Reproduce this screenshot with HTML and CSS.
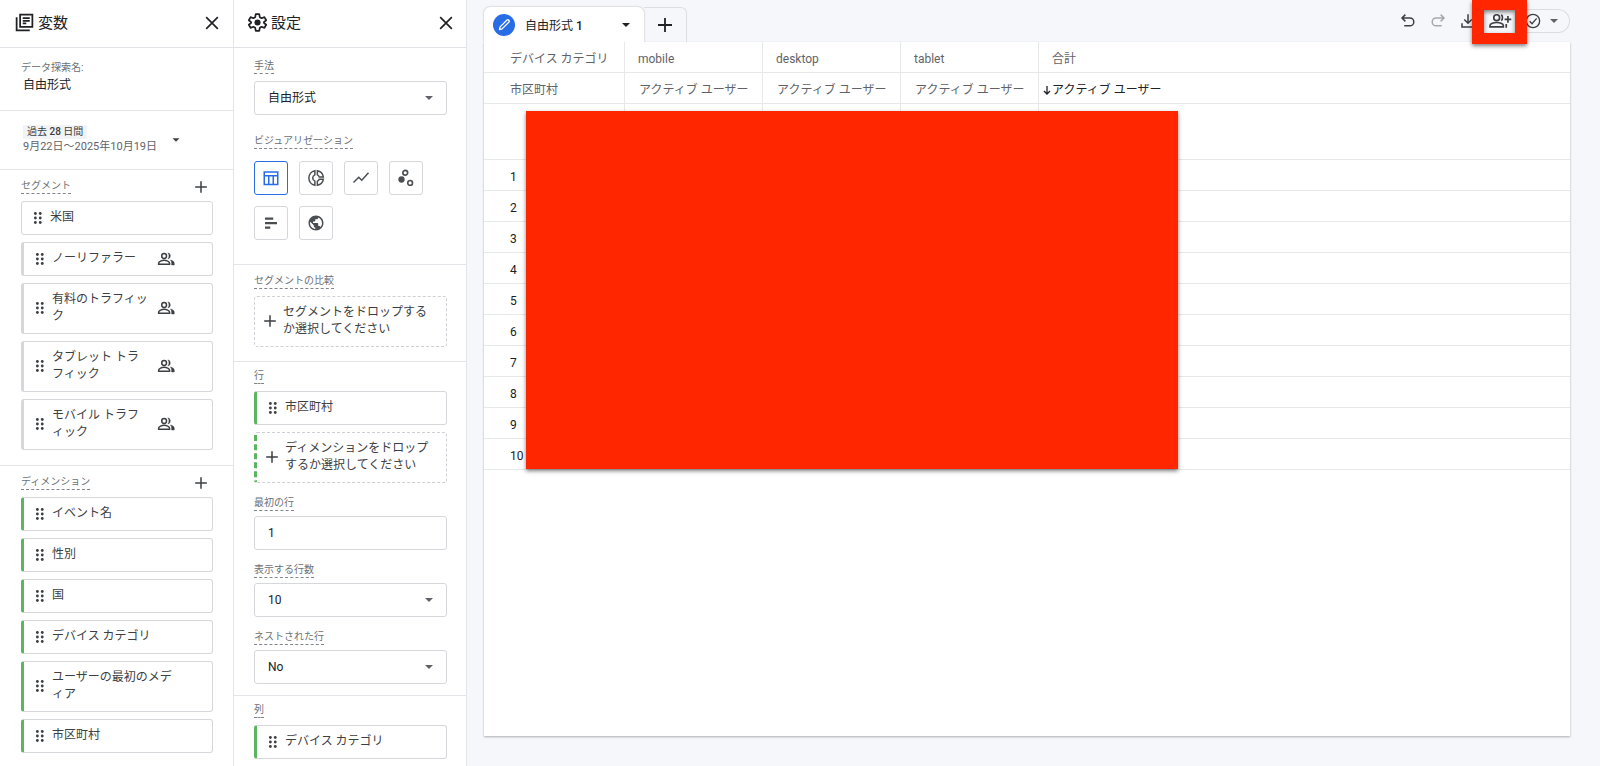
FILE: index.html
```html
<!DOCTYPE html>
<html lang="ja">
<head>
    <meta charset="UTF-8">
    <meta name="viewport" content="width=device-width, initial-scale=1.0">
    <title>データ探索</title>
    <link rel="stylesheet" href="styles.css">
</head>
<body>
    <!-- Icônes partagées -->
    <svg class="sprite" aria-hidden="true">
        <symbol id="i-close" viewBox="0 0 24 24"><path d="M5 5l14 14M19 5L5 19" fill="none" stroke="currentColor" stroke-width="2"/></symbol>
        <symbol id="i-plus" viewBox="0 0 24 24"><path d="M12 5v14M5 12h14" fill="none" stroke="currentColor" stroke-width="1.800"/></symbol>
        <symbol id="i-drag" viewBox="0 0 24 24"><g fill="currentColor"><circle cx="8.500" cy="6" r="1.900"/><circle cx="15" cy="6" r="1.900"/><circle cx="8.500" cy="12" r="1.900"/><circle cx="15" cy="12" r="1.900"/><circle cx="8.500" cy="18" r="1.900"/><circle cx="15" cy="18" r="1.900"/></g></symbol>
        <symbol id="i-down" viewBox="0 0 24 24"><path d="M6 9h12l-6 6z" fill="currentColor"/></symbol>
        <symbol id="i-people" viewBox="0 0 24 24"><g fill="none" stroke="currentColor" stroke-width="2"><circle cx="9.500" cy="8" r="3.200"/><path d="M2.200 19v-1.500c0-2.300 4.300-3.700 7.300-3.700s7.300 1.400 7.300 3.700V19z"/></g><path d="M14.500 12a4.200 4.200 0 0 0 0-8.200c2 2.300 2 6 0 8.200zM18 13.300c2.800.6 5 2 5 4.200V20h-3.500v-2.500c0-1.700-.5-3-1.500-4.200z" fill="currentColor" stroke="currentColor" stroke-width=".6"/></symbol>
    </svg>

    <div class="app">
        <!-- Panneau des variables -->
        <aside class="panel variables">
            <header class="panel-header">
                <svg class="title-icon" viewBox="0 0 24 24"><g fill="none" stroke="currentColor" stroke-width="2"><path d="M3 6v15h15"/><rect x="7" y="3" width="14" height="14"/><path d="M10 7h8M10 10h8M10 13h4"/></g></svg>
                <h1>変数</h1>
                <button class="icon-button" aria-label="閉じる"><svg class="icon"><use href="#i-close"/></svg></button>
            </header>

            <section class="section name-section">
                <div class="small-label">データ探索名:</div>
                <div class="exploration-name">自由形式</div>
            </section>

            <section class="section date-section">
                <button class="date-button">
                    <span class="date-text">
                        <span class="date-badge">過去 <b>28</b> 日間</span>
                        <span class="date-range">9月22日〜2025年10月19日</span>
                    </span>
                    <svg class="caret"><use href="#i-down"/></svg>
                </button>
            </section>

            <section class="section segments">
                <div class="section-head">
                    <span class="field-label">セグメント</span>
                    <button class="add-button" aria-label="セグメントを追加"><svg class="icon"><use href="#i-plus"/></svg></button>
                </div>
                <div class="chips">
                    <div class="chip"><svg class="drag"><use href="#i-drag"/></svg><span class="chip-text">米国</span></div>
                    <div class="chip bar-gray"><svg class="drag"><use href="#i-drag"/></svg><span class="chip-text">ノーリファラー</span><svg class="people"><use href="#i-people"/></svg></div>
                    <div class="chip bar-gray"><svg class="drag"><use href="#i-drag"/></svg><span class="chip-text">有料のトラフィック</span><svg class="people"><use href="#i-people"/></svg></div>
                    <div class="chip bar-gray"><svg class="drag"><use href="#i-drag"/></svg><span class="chip-text">タブレット トラフィック</span><svg class="people"><use href="#i-people"/></svg></div>
                    <div class="chip bar-gray"><svg class="drag"><use href="#i-drag"/></svg><span class="chip-text">モバイル トラフィック</span><svg class="people"><use href="#i-people"/></svg></div>
                </div>
            </section>

            <section class="section dimensions">
                <div class="section-head">
                    <span class="field-label">ディメンション</span>
                    <button class="add-button" aria-label="ディメンションを追加"><svg class="icon"><use href="#i-plus"/></svg></button>
                </div>
                <div class="chips">
                    <div class="chip bar-green"><svg class="drag"><use href="#i-drag"/></svg><span class="chip-text">イベント名</span></div>
                    <div class="chip bar-green"><svg class="drag"><use href="#i-drag"/></svg><span class="chip-text">性別</span></div>
                    <div class="chip bar-green"><svg class="drag"><use href="#i-drag"/></svg><span class="chip-text">国</span></div>
                    <div class="chip bar-green"><svg class="drag"><use href="#i-drag"/></svg><span class="chip-text">デバイス カテゴリ</span></div>
                    <div class="chip bar-green"><svg class="drag"><use href="#i-drag"/></svg><span class="chip-text">ユーザーの最初のメディア</span></div>
                    <div class="chip bar-green"><svg class="drag"><use href="#i-drag"/></svg><span class="chip-text">市区町村</span></div>
                </div>
            </section>
        </aside>

        <!-- Panneau des paramètres -->
        <aside class="panel settings">
            <header class="panel-header">
                <svg class="title-icon" viewBox="0 0 24 24"><path d="M10 2.500h4l.6 3.400 2.100 1.200 3.200-1.200 2 3.500-2.600 2.200v.8l2.600 2.200-2 3.500-3.200-1.200-2.100 1.200-.6 3.400h-4l-.6-3.400-2.100-1.200-3.200 1.200-2-3.500 2.600-2.200v-.8L2.100 9.400l2-3.500 3.200 1.200 2.100-1.200z" fill="none" stroke="currentColor" stroke-width="2" stroke-linejoin="round"/><circle cx="12" cy="12" r="3.500" fill="currentColor"/></svg>
                <h1>設定</h1>
                <button class="icon-button" aria-label="閉じる"><svg class="icon"><use href="#i-close"/></svg></button>
            </header>

            <section class="section technique">
                <div class="section-head"><label class="field-label" for="technique">手法</label></div>
                <div class="select-box">
                    <select id="technique"><option>自由形式</option></select>
                    <svg class="select-arrow"><use href="#i-down"/></svg>
                </div>
                <div class="section-head visual-head"><span class="field-label">ビジュアリゼーション</span></div>
                <div class="visuals">
                    <button class="visual selected" aria-label="表"><svg viewBox="0 0 24 24"><path d="M3 4h18v16.500H3zM3 9h18M9 9v11M15 9v11" fill="none" stroke="currentColor" stroke-width="2"/></svg></button>
                    <button class="visual" aria-label="ドーナツ グラフ"><svg viewBox="0 0 24 24"><g fill="none" stroke="currentColor" stroke-width="2"><path d="M10.500 2.200a10 10 0 0 0 0 19.600v-5.600a4.500 4.500 0 0 1 0-8.400zM13.800 2.200v5.600a4.500 4.500 0 0 1 2.500 2.700h5.500a10 10 0 0 0-8-8.300zM21.800 13.600h-5.500a4.500 4.500 0 0 1-2.500 2.600v5.600a10 10 0 0 0 8-8.200z"/></g></svg></button>
                    <button class="visual" aria-label="折れ線グラフ"><svg viewBox="0 0 24 24"><path d="M2 18l7-7 4 4 9-10" fill="none" stroke="currentColor" stroke-width="2"/></svg></button>
                    <button class="visual" aria-label="散布図"><svg viewBox="0 0 24 24"><circle cx="6" cy="14" r="4.200" fill="currentColor"/><g fill="none" stroke="currentColor" stroke-width="2.200"><circle cx="11" cy="5" r="3.200"/><circle cx="17.500" cy="18.500" r="3.200"/></g></svg></button>
                    <button class="visual" aria-label="棒グラフ"><svg viewBox="0 0 24 24"><path d="M4 6h11M4 12h16M4 18h7" fill="none" stroke="currentColor" stroke-width="3"/></svg></button>
                    <button class="visual" aria-label="地図"><svg viewBox="0 0 24 24"><path d="M12 2C6.480 2 2 6.480 2 12s4.480 10 10 10 10-4.480 10-10S17.520 2 12 2zm-1 17.930c-3.950-.49-7-3.850-7-7.930 0-.62.080-1.210.210-1.790L9 15v1c0 1.100.9 2 2 2v1.930zm6.900-2.540c-.26-.81-1-1.390-1.900-1.390h-1v-3c0-.55-.45-1-1-1H8v-2h2c.55 0 1-.45 1-1V7h2c1.100 0 2-.9 2-2v-.41c2.930 1.190 5 4.060 5 7.410 0 2.080-.8 3.970-2.100 5.390z" fill="currentColor"/></svg></button>
                </div>
            </section>

            <section class="section comparison">
                <div class="section-head"><span class="field-label">セグメントの比較</span></div>
                <button class="drop"><svg class="icon"><use href="#i-plus"/></svg><span>セグメントをドロップするか選択してください</span></button>
            </section>

            <section class="section rows">
                <div class="section-head"><span class="field-label">行</span></div>
                <div class="chips">
                    <div class="chip bar-green"><svg class="drag"><use href="#i-drag"/></svg><span class="chip-text">市区町村</span></div>
                    <button class="drop bar-dashed"><svg class="icon"><use href="#i-plus"/></svg><span>ディメンションをドロップするか選択してください</span></button>
                </div>
                <div class="field">
                    <label class="field-label" for="start-row">最初の行</label>
                    <input type="text" id="start-row" value="1">
                </div>
                <div class="field">
                    <label class="field-label" for="show-rows">表示する行数</label>
                    <div class="select-box">
                        <select id="show-rows"><option>10</option></select>
                        <svg class="select-arrow"><use href="#i-down"/></svg>
                    </div>
                </div>
                <div class="field">
                    <label class="field-label" for="nested-rows">ネストされた行</label>
                    <div class="select-box">
                        <select id="nested-rows"><option>No</option></select>
                        <svg class="select-arrow"><use href="#i-down"/></svg>
                    </div>
                </div>
            </section>

            <section class="section columns">
                <div class="section-head"><span class="field-label">列</span></div>
                <div class="chips">
                    <div class="chip bar-green"><svg class="drag"><use href="#i-drag"/></svg><span class="chip-text">デバイス カテゴリ</span></div>
                </div>
            </section>
        </aside>

        <!-- Zone principale -->
        <main class="main">
            <div class="topbar">
                <button class="tab">
                    <svg class="tab-icon" viewBox="0 0 22 22"><circle cx="11" cy="11" r="11" fill="#286ce6"/><path d="M6.500 15.500l.6-2.600 6.900-6.900c.5-.5 1-.5 1.500 0l.5.5c.5.5.5 1 0 1.500l-6.900 6.900z" fill="none" stroke="#fff" stroke-width="1.300" stroke-linejoin="round"/></svg>
                    <span class="tab-title">自由形式 <b>1</b></span>
                    <svg class="tab-caret"><use href="#i-down"/></svg>
                </button>
                <button class="tab-add" aria-label="タブを追加"><svg><use href="#i-plus"/></svg></button>
                <div class="tools">
                    <button class="tool" aria-label="元に戻す"><svg viewBox="0 0 24 24"><path d="M8.500 3.500L4 8l4.500 4.500M4 8h10.500a5.200 5.200 0 0 1 0 10.400H7" fill="none" stroke="currentColor" stroke-width="2"/></svg></button>
                    <button class="tool redo" aria-label="やり直す"><svg viewBox="0 0 24 24"><path d="M15.500 3.500L20 8l-4.500 4.500M20 8H9.500a5.200 5.200 0 0 0 0 10.400H17" fill="none" stroke="currentColor" stroke-width="2"/></svg></button>
                    <button class="tool" aria-label="ダウンロード"><svg viewBox="0 0 24 24"><path d="M12 3v12M7 10l5 5 5-5M4 15v5h16v-5" fill="none" stroke="currentColor" stroke-width="2"/></svg></button>
                    <button class="tool share" aria-label="共有"><svg viewBox="0 0 28 24"><g fill="none" stroke="currentColor" stroke-width="2"><circle cx="10" cy="8" r="3.500"/><path d="M2 19v-1.500c0-2.400 4.500-3.700 8-3.700s8 1.300 8 3.700V19zM15.500 4.500c2 1.500 2 5.500 0 7M21.500 15.500v4.500M23.500 6v8M19.500 10h8"/></g></svg></button>
                    <button class="status" aria-label="データ品質">
                        <svg class="check" viewBox="0 0 24 24"><circle cx="12" cy="12" r="10" fill="none" stroke="currentColor" stroke-width="2"/><path d="M7 12.500l3.500 3.500 7-8" fill="none" stroke="currentColor" stroke-width="2"/></svg>
                        <svg class="status-caret"><use href="#i-down"/></svg>
                    </button>
                </div>
            </div>

            <div class="canvas">
                <div class="table-wrap">
                    <table>
                        <colgroup><col class="col-first"><col class="col-data"><col class="col-data"><col class="col-data"><col></colgroup>
                        <thead>
                            <tr><th>デバイス カテゴリ</th><th>mobile</th><th>desktop</th><th>tablet</th><th>合計</th></tr>
                            <tr class="metrics"><th>市区町村</th><th>アクティブ ユーザー</th><th>アクティブ ユーザー</th><th>アクティブ ユーザー</th><th class="sorted"><svg viewBox="0 0 10 12"><path d="M5 2v8M2 7l3 3 3-3" fill="none" stroke="currentColor" stroke-width="1.300"/></svg>アクティブ ユーザー</th></tr>
                        </thead>
                        <tbody>
                            <tr class="total"><td></td><td></td><td></td><td></td><td></td></tr>
                            <tr><td>1</td><td></td><td></td><td></td><td></td></tr>
                            <tr><td>2</td><td></td><td></td><td></td><td></td></tr>
                            <tr><td>3</td><td></td><td></td><td></td><td></td></tr>
                            <tr><td>4</td><td></td><td></td><td></td><td></td></tr>
                            <tr><td>5</td><td></td><td></td><td></td><td></td></tr>
                            <tr><td>6</td><td></td><td></td><td></td><td></td></tr>
                            <tr><td>7</td><td></td><td></td><td></td><td></td></tr>
                            <tr><td>8</td><td></td><td></td><td></td><td></td></tr>
                            <tr><td>9</td><td></td><td></td><td></td><td></td></tr>
                            <tr><td>10</td><td></td><td></td><td></td><td></td></tr>
                        </tbody>
                    </table>
                    <div class="mask"></div>
                </div>
            </div>
        </main>
    </div>
</body>
</html>
```
FILE: styles.css
```css
* {
    box-sizing: border-box;
}

body {
    margin: 0;
    font-family: Roboto, "Noto Sans CJK JP", sans-serif;
    font-size: 12px;
    color: #3c4043;
    background: #f6f7fa;
}

button, input, select {
    font: inherit;
    color: inherit;
}

button {
    padding: 0;
    border: none;
    background: none;
    cursor: pointer;
}

svg {
    display: block;
    flex: none;
}

.sprite {
    position: absolute;
    width: 0;
    height: 0;
}

.app {
    display: flex;
    min-height: 100vh;
}

/* Panneaux */
.panel {
    flex: none;
    background: #fff;
    border-right: 1px solid #e3e5e8;
}

.variables {
    width: 234px;
}

.settings {
    width: 233px;
}

.panel-header {
    display: flex;
    align-items: center;
    gap: 3px;
    height: 48px;
    padding: 0 11px 2px 14px;
    border-bottom: 1px solid #dfe1e4;
    color: #202124;
}

.settings .panel-header {
    padding-left: 13px;
    padding-right: 10px;
}

.panel-header h1 {
    flex: 1;
    margin: 0;
    font-size: 15px;
    font-weight: 400;
    line-height: 22px;
}

.title-icon {
    width: 21px;
    height: 21px;
}

.icon {
    width: 20px;
    height: 20px;
}

.section {
    padding: 9px 19px 0 20px;
    border-bottom: 1px solid #e3e5e8;
}

.variables .section {
    padding-left: 21px;
    padding-right: 20px;
}

.section:last-child {
    border-bottom: none;
}

.small-label {
    font-size: 10px;
    line-height: 14px;
    color: #6b7075;
}

.variables .name-section {
    padding-top: 13px;
    padding-bottom: 16px;
}

.exploration-name {
    padding: 1px 2px 0;
    line-height: 18px;
    color: #202124;
}

.variables .date-section {
    padding: 14px 23px;
}

.date-button {
    display: flex;
    align-items: center;
    gap: 12px;
    text-align: left;
}

.date-text {
    display: flex;
    flex-direction: column;
    align-items: flex-start;
}

.date-badge {
    padding: 0 4px;
    font-size: 10px;
    line-height: 14px;
    background: #f1f3f4;
}

.date-badge b, .tab-title b {
    font-weight: 500;
}

.date-range {
    font-size: 11px;
    line-height: 16px;
    white-space: nowrap;
    color: #5f6368;
}

.caret {
    width: 14px;
    height: 14px;
}

.section-head {
    display: flex;
    align-items: center;
    justify-content: space-between;
    height: 15px;
    margin-bottom: 7px;
}

.field-label {
    font-size: 10px;
    line-height: 14px;
    color: #6b7075;
    border-bottom: 1px dashed #80868b;
}

.add-button {
    display: flex;
    justify-content: center;
    width: 24px;
}

.segments {
    padding-bottom: 15px;
}

.chips {
    display: flex;
    flex-direction: column;
    gap: 7px;
}

.chip {
    display: flex;
    align-items: center;
    min-height: 34px;
    padding: 7px 37px 8px 7px;
    border: 1px solid #d5d7da;
    border-radius: 3px;
    line-height: 17px;
}

.chip-text {
    flex: 1;
    margin-left: 3px;
    line-break: loose;
}

.drag, .people {
    width: 18px;
    height: 18px;
    margin: -1px 0;
}

.people {
    margin-left: 8px;
}

.bar-gray {
    border-left: 3px solid #d5d7da;
}

.bar-green {
    border-left: 3px solid #5bb55f;
}

.drop {
    display: flex;
    align-items: center;
    gap: 3px;
    width: 100%;
    min-height: 51px;
    padding: 7px 11px 8px 5px;
    border: 1px dashed #cdd0d4;
    border-radius: 3px;
    line-height: 17px;
    text-align: left;
}

.bar-dashed {
    border-left: 3px dashed #5bb55f;
}

/* Paramètres */
.technique {
    padding-top: 11px;
    padding-bottom: 24px;
}

.select-box {
    display: grid;
    align-items: center;
}

.select-box select, .select-arrow {
    grid-area: 1 / 1;
}

.select-arrow {
    justify-self: end;
    width: 16px;
    height: 16px;
    margin-right: 10px;
    color: #5f6368;
    pointer-events: none;
}

select, input {
    width: 100%;
    height: 34px;
    padding: 0 13px;
    border: 1px solid #d5d7da;
    border-radius: 3px;
    background: #fff;
    color: #202124;
    appearance: none;
}

.visual-head {
    margin-top: 19px;
    margin-bottom: 12px;
}

.visuals {
    display: flex;
    flex-wrap: wrap;
    gap: 11px;
}

.visual {
    display: flex;
    align-items: center;
    justify-content: center;
    width: 34px;
    height: 34px;
    border: 1px solid #d5d7da;
    border-radius: 3px;
    color: #4b4f53;
}

.visual svg {
    width: 18px;
    height: 18px;
}

.visual.selected {
    border-color: #286ce6;
    color: #286ce6;
}

.comparison {
    padding-bottom: 14px;
}

.rows {
    padding-top: 7px;
    padding-bottom: 11px;
}

.columns {
    padding-top: 7px;
}

.field {
    display: flex;
    flex-direction: column;
    align-items: flex-start;
    gap: 5px;
    margin-top: 13px;
}

.field .select-box {
    width: 100%;
}

/* Zone principale */
.main {
    display: flex;
    flex: 1;
    flex-direction: column;
    min-width: 0;
    padding: 7px 30px 30px 17px;
}

.topbar {
    display: flex;
    height: 35px;
}

.tab {
    display: flex;
    align-items: center;
    width: 160px;
    padding: 0 10px 0 9px;
    border-radius: 6px 6px 0 0;
    background: #fff;
    box-shadow: 0 0 2px rgba(60, 64, 67, 0.4);
    clip-path: inset(-3px -3px 0 -3px);
    color: #202124;
}

.tab-icon {
    width: 22px;
    height: 22px;
}

.tab-title {
    flex: 1;
    margin-left: 10px;
    text-align: left;
}

.tab-caret {
    width: 16px;
    height: 16px;
}

.tab-add {
    display: flex;
    align-items: center;
    justify-content: center;
    width: 43px;
    border: 1px solid #dcdee2;
    border-width: 1px 1px 0 0;
    border-radius: 0 6px 0 0;
    color: #202124;
}

.tab-add svg {
    width: 24px;
    height: 24px;
}

.tools {
    display: flex;
    align-items: flex-start;
    margin-left: auto;
    padding-top: 2px;
    color: #3c4043;
}

.tool {
    display: flex;
    align-items: center;
    justify-content: center;
    width: 30px;
    height: 24px;
}

.tool svg {
    width: 18px;
    height: 18px;
}

.redo {
    color: #a5a9ad;
}

.tool.share {
    position: relative;
    width: 34px;
}

.tool.share svg {
    width: 24px;
    height: 20px;
}

/* Cadre rouge autour du bouton de partage */
.share::after {
    content: "";
    position: absolute;
    box-sizing: border-box;
    top: -9px;
    left: -11px;
    width: 55px;
    height: 44px;
    border: solid #ff2600;
    border-width: 10px 12px 11px;
    box-shadow: 0 2px 4px rgba(0, 0, 0, 0.5), inset 0 2px 4px rgba(0, 0, 0, 0.5);
}

.status {
    display: flex;
    align-items: center;
    gap: 5px;
    width: 53px;
    height: 24px;
    padding-left: 8px;
    border: 1px solid #dadce0;
    border-left: none;
    border-radius: 0 12px 12px 0;
}

.check {
    width: 16px;
    height: 16px;
}

.status-caret {
    width: 16px;
    height: 16px;
    color: #5f6368;
}

.canvas {
    flex: 1;
    background: #fff;
    box-shadow: 0 1px 2px rgba(60, 64, 67, 0.4);
}

.table-wrap {
    position: relative;
}

table {
    width: 100%;
    table-layout: fixed;
    border-collapse: separate;
    border-spacing: 0;
}

.col-first {
    width: 141px;
}

.col-data {
    width: 138px;
}

th, td {
    height: 31px;
    padding: 3px 0 0 13px;
    border-right: 1px solid #e6e8ea;
    border-bottom: 1px solid #e6e8ea;
    font-weight: 400;
    line-height: 18px;
    text-align: left;
    white-space: nowrap;
    color: #5f6368;
}

.metrics th {
    padding-left: 14px;
}

tr th:first-child, tr td:first-child {
    padding-left: 26px;
}

th:last-child, td:last-child {
    border-right: none;
}

td {
    color: #202124;
}

.total td {
    height: 56px;
}

.metrics .sorted {
    padding-left: 3px;
    color: #202124;
}

.sorted svg {
    display: inline-block;
    width: 10px;
    height: 12px;
    vertical-align: -2px;
}

/* Zone masquée */
.mask {
    position: absolute;
    top: 69px;
    bottom: 1px;
    left: 42px;
    width: 60%;
    background: #ff2600;
    box-shadow: 0 2px 4px rgba(0, 0, 0, 0.5);
}
```
